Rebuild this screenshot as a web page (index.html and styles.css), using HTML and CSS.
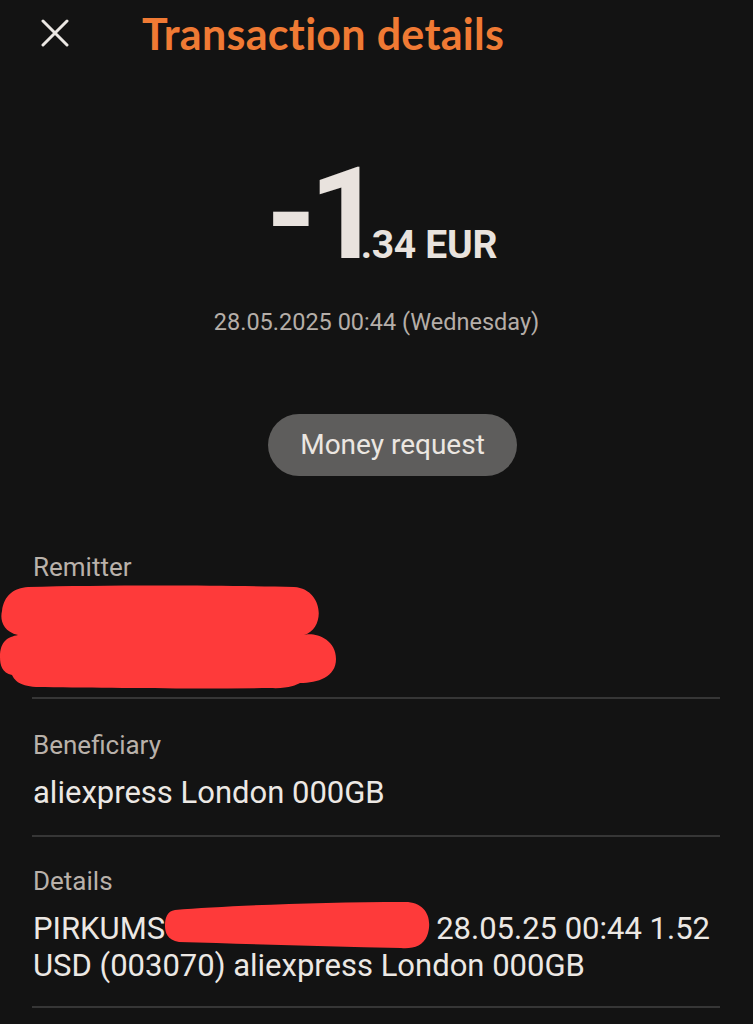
FILE: index.html
```html
<!DOCTYPE html>
<html>
<head>
<meta charset="UTF-8">
<link rel="stylesheet" href="styles.css">
<title>Transaction details</title>
</head>
<body>

<div class="topbar">
  <span class="close">
    <svg width="28" height="28" viewBox="0 0 28 28"><path d="M2 2 L26 26 M26 2 L2 26" stroke="#ece8e4" stroke-width="3" stroke-linecap="round" fill="none"/></svg>
  </span>
  <h1 class="title">Transaction details</h1>
</div>

<div class="amount">
  <span class="amount-big">-1</span><span class="amount-small">.34 EUR</span>
</div>

<p class="when">28.05.2025 00:44 (Wednesday)</p>

<div class="actions">
  <span class="pill">Money request</span>
</div>

<div class="rows">
  <div class="row row-remitter">
    <div class="label">Remitter</div>
    <div class="blotted">
      <svg class="blot" width="340" height="104" viewBox="0 0 340 104">
        <path d="M28 2 C100 0 220 0 294 2 C324 4 326 44 304 50 C312 47 336 52 336 74 C336 92 318 98 300 98 C296 100 288 104 270 103 C190 104 100 103 36 102 C18 101 14 94 12 90 C2 88 0 80 0 72 C0 56 8 52 18 50 C2 46 0 34 2 26 C4 10 14 3 28 2 Z" fill="#fe3a3a"/>
      </svg>
    </div>
  </div>
  <div class="row">
    <div class="label">Beneficiary</div>
    <div class="value">aliexpress London 000GB</div>
  </div>
  <div class="row row-details">
    <div class="label">Details</div>
    <div class="value">PIRKUMS<span class="scribble"><svg width="266" height="50" viewBox="0 0 266 50"><path d="M10 10 C60 6 150 2 240 2 C262 2 268 20 262 36 C258 46 248 49 236 48 C160 46 80 44 14 42 C2 40 0 32 0 26 C0 18 2 11 10 10 Z" fill="#fe3a3a"/></svg></span>28.05.25 00:44 1.52 USD (003070) aliexpress London 000GB</div>
  </div>
</div>

</body>
</html>
```

FILE: styles.css
```css
body { margin: 0; background-color: #131313; color: #ece8e4;
       font-family: Roboto, "Liberation Sans", sans-serif; }

.topbar { display: flex; align-items: center; height: 66px; }
.close { width: 28px; height: 28px; margin-left: 41px; display: flex; }
.title { margin: 0 0 0 73px; font-family: Lato, "Open Sans", sans-serif;
         font-weight: 700; font-size: 43px; line-height: 1; color: #f07a34; letter-spacing: 0.3px; }

.amount { text-align: center; margin-top: 84px; line-height: 1; padding-left: 10px; }
.amount-big { font-size: 128px; font-weight: 700; letter-spacing: -7px; margin-right: -15px; color: #e9e3de; }
.amount-small { font-size: 39px; font-weight: 700; letter-spacing: -0.3px; color: #e9e3de; }

.when { text-align: center; margin: 30px 0 0; font-size: 23.5px; line-height: 28px; color: #b5aea8; }

.actions { display: flex; justify-content: center; margin-top: 78px; padding-left: 32px; }
.pill { display: inline-block; background-color: #5e5d5c; color: #ebe6e1;
        font-size: 28px; height: 62px; line-height: 62px;
        padding: 0 32px; border-radius: 31px; }

.rows { margin: 76px 33px 0 32px; }
.row { border-bottom: 2px solid #363636; padding: 31px 0 24px 1px; }
.label { font-size: 26px; line-height: 30px; color: #b9b1aa; }
.value { font-size: 31px; line-height: 37px; margin-top: 14px; color: #ece8e4; }

.row-remitter { padding: 0 0 8px 1px; }
.row-details { padding: 29px 0 22px 1px; }
.blotted { height: 104px; margin: 3px 0 0 -33px; }
.blot { display: block; }

.scribble { display: inline-block; position: relative; width: 266px; height: 30px;
            vertical-align: -6px; margin-right: 5px; }
.scribble svg { position: absolute; left: 0; top: -15px; }
```
